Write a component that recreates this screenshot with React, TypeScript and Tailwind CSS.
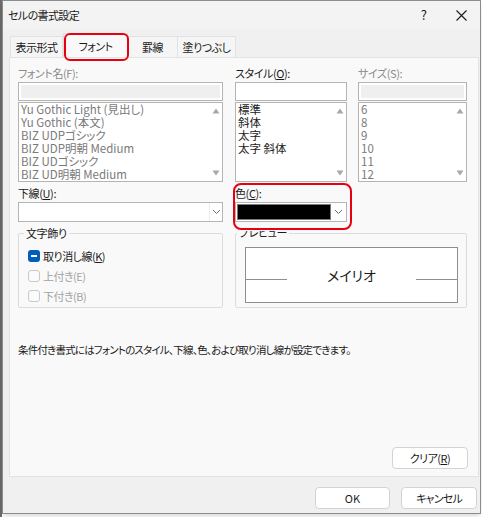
import React from "react";

const fontNames = [
  "Yu Gothic Light (見出し)",
  "Yu Gothic (本文)",
  "BIZ UDPゴシック",
  "BIZ UDP明朝 Medium",
  "BIZ UDゴシック",
  "BIZ UD明朝 Medium",
];
const styles = ["標準", "斜体", "太字", "太字 斜体"];
const sizes = ["6", "8", "9", "10", "11", "12"];

function ScrollArrows() {
  return (
    <div className="flex flex-col justify-between w-[12px] py-[5px] items-center">
      <svg width="8" height="6" viewBox="0 0 8 6">
        <path d="M4 0.5 L7.5 5.5 L0.5 5.5 Z" fill="#a8a8a8" />
      </svg>
      <svg width="8" height="6" viewBox="0 0 8 6">
        <path d="M0.5 0.5 L7.5 0.5 L4 5.5 Z" fill="#a8a8a8" />
      </svg>
    </div>
  );
}

function ListBox({ items, color }: { items: string[]; color: string }) {
  return (
    <div className="h-[80px] mt-[1px] border border-[#b4b4b4] bg-white flex overflow-hidden">
      <div className={`flex-1 pl-[2px] leading-[13px] text-[11.5px] ${color}`}>
        {items.map((t) => (
          <div key={t} className="h-[13px] whitespace-nowrap">
            {t}
          </div>
        ))}
      </div>
      <ScrollArrows />
    </div>
  );
}

function Chevron() {
  return (
    <svg width="9" height="6" viewBox="0 0 9 6">
      <path d="M1 1 L4.5 4.5 L8 1" fill="none" stroke="#6e6e6e" strokeWidth="1" />
    </svg>
  );
}

function Check({ checked, label, disabled }: { checked?: boolean; label: React.ReactNode; disabled?: boolean }) {
  return (
    <div className="flex items-center h-[20px]">
      {checked ? (
        <div className="w-[12px] h-[12px] rounded-[3px] bg-[#005fb8] flex items-center justify-center">
          <div className="w-[6px] h-[1.5px] bg-white" />
        </div>
      ) : (
        <div className="w-[12px] h-[12px] rounded-[3px] border border-[#c9c9c9] bg-[#fbfbfb]" />
      )}
      <span
        className={`ml-[3px] text-[11px] tracking-[-0.5px] ${disabled ? "text-[#a3a3a3]" : "text-[#1a1a1a]"}`}
      >
        {label}
      </span>
    </div>
  );
}

export default function App() {
  return (
    <div
      className="w-[482px] h-[517px] bg-white flex overflow-hidden text-[#1a1a1a] [font-feature-settings:'palt']"
      style={{ fontFamily: '"Noto Sans CJK JP", "Noto Sans", sans-serif' }}
    >
      <div className="w-[2px] h-full bg-[#6b6b6b]" />
      <div className="w-[479px] h-[514px] border border-[#8c8c8c] bg-[#f0f0f0] flex flex-col shadow-md">
        {/* title bar */}
        <div className="h-[28px] flex items-center pl-[5px] bg-[#f3f3f3]">
          <span className="text-[11px] tracking-[-0.6px]">セルの書式設定</span>
          <span className="ml-auto text-[13px] mr-[29px]">?</span>
          <svg width="11" height="11" viewBox="0 0 11 11" className="mr-[13px]">
            <path d="M0.5 0.5 L10.5 10.5 M10.5 0.5 L0.5 10.5" stroke="#1a1a1a" strokeWidth="1.1" />
          </svg>
        </div>

        {/* tabs */}
        <div className="h-[28px] flex items-end pl-[7px] text-[11px] tracking-[-0.5px]">
          <div className="w-[53px] h-[21px] flex items-center justify-center border border-b-0 border-[#e2e2e2] bg-[#f5f5f5]">
            表示形式
          </div>
          <div className="relative w-[65px] h-[24px] flex items-center justify-center bg-[#f9f9f9] border border-b-0 border-[#dedede] pt-[1px]">
            フォント
            <div className="absolute left-[0px] top-[-1px] w-[65px] h-[28px] border-2 border-[#e60012] rounded-[6px]" />
          </div>
          <div className="w-[50px] h-[21px] flex items-center justify-center border border-b-0 border-l-0 border-[#e2e2e2] bg-[#f5f5f5]">
            罫線
          </div>
          <div className="w-[58px] h-[21px] flex items-center justify-center border border-b-0 border-l-0 border-[#e2e2e2] bg-[#f5f5f5]">
            塗りつぶし
          </div>
        </div>

        {/* panel */}
        <div className="ml-[6px] w-[470px] h-[420px] border border-[#e3e3e3] bg-[#f9f9f9] pl-[8px] pr-[10px] pt-[7px] flex flex-col">
          <div className="flex">
            <div className="w-[205px]">
              <div className="h-[16px] leading-[16px] text-[11px] tracking-[-0.4px] text-[#8a8a8a]">フォント名(F):</div>
              <div className="mt-[1px] h-[19px] border border-[#b4b4b4] bg-white p-[2px]">
                <div className="w-full h-full bg-[#efefef]" />
              </div>
              <ListBox items={fontNames} color="text-[#7a7a7a]" />
            </div>
            <div className="w-[112px] ml-[12px]">
              <div className="h-[16px] leading-[16px] text-[11px] tracking-[-0.4px]">
                スタイル(<span className="underline">O</span>):
              </div>
              <div className="mt-[1px] h-[19px] border border-[#b4b4b4] bg-white" />
              <ListBox items={styles} color="text-[#1a1a1a]" />
            </div>
            <div className="w-[109px] ml-[11px]">
              <div className="h-[16px] leading-[16px] text-[11px] tracking-[-0.4px] text-[#8a8a8a]">サイズ(S):</div>
              <div className="mt-[1px] h-[19px] border border-[#b4b4b4] bg-white p-[2px]">
                <div className="w-full h-full bg-[#efefef]" />
              </div>
              <ListBox items={sizes} color="text-[#7a7a7a]" />
            </div>
          </div>

          <div className="flex mt-[3px]">
            <div className="w-[205px]">
              <div className="h-[16px] leading-[16px] text-[11px] tracking-[-0.4px]">
                下線(<span className="underline">U</span>):
              </div>
              <div className="mt-[1px] h-[20px] border border-[#b4b4b4] bg-white flex">
                <div className="flex-1" />
                <div className="w-[13px] border-l border-[#ececec] flex items-center justify-center">
                  <Chevron />
                </div>
              </div>
            </div>
            <div className="w-[112px] ml-[12px] relative">
              <div className="h-[16px] leading-[16px] text-[11px] tracking-[-0.4px]">
                色(<span className="underline">C</span>):
              </div>
              <div className="mt-[1px] h-[20px] border border-[#b4b4b4] bg-white flex p-[1px]">
                <div className="flex-1 bg-black border border-[#7a7a7a]" />
                <div className="w-[14px] flex items-center justify-center">
                  <Chevron />
                </div>
              </div>
              <div className="absolute left-[-2px] top-[-2px] w-[119px] h-[47px] border-2 border-[#e60012] rounded-[8px]" />
            </div>
          </div>

          <div className="flex mt-[11px]">
            <div className="relative w-[205px] h-[75px] border border-[#dcdcdc] rounded-[2px] pl-[9px] pt-[12px]">
              <div className="absolute left-[5px] top-[-9px] px-[2px] bg-[#f9f9f9] text-[11px] tracking-[-0.4px] leading-[16px]">
                文字飾り
              </div>
              <Check
                checked
                label={
                  <>
                    取り消し線(<span className="underline">K</span>)
                  </>
                }
              />
              <Check disabled label="上付き(E)" />
              <Check disabled label="下付き(B)" />
            </div>
            <div className="relative w-[232px] ml-[12px] h-[75px] border border-[#dcdcdc] rounded-[2px] pl-[9px] pr-[8px] pt-[13px]">
              <div className="absolute left-[1px] top-[-3px] h-[9px] overflow-hidden px-[2px] bg-[#f9f9f9]">
                <div className="text-[11px] tracking-[-0.4px] leading-[16px] mt-[-7px]">プレビュー</div>
              </div>
              <div className="h-[56px] border border-[#8e8e8e] bg-white flex items-center">
                <div className="w-[41px] h-px bg-[#8e8e8e] mt-[9px]" />
                <div className="flex-1 text-center text-[14px]">メイリオ</div>
                <div className="w-[41px] h-px bg-[#8e8e8e] mt-[9px]" />
              </div>
            </div>
          </div>

          <div className="mt-[34px] h-[16px] leading-[16px] text-[10.5px] tracking-[-0.8px] whitespace-nowrap">
            条件付き書式にはフォントのスタイル、下線、色、および取り消し線が設定できます。
          </div>

          <div className="flex justify-end mt-[89px]">
            <button className="w-[76px] h-[22px] bg-white border border-[#d3d3d3] rounded-[4px] text-[11px] tracking-[-0.5px]">
              クリア(<span className="underline">R</span>)
            </button>
          </div>
        </div>

        {/* buttons */}
        <div className="flex justify-end mt-[10px] mr-[3px] gap-[11px]">
          <button className="w-[75px] h-[22px] bg-white border border-[#d3d3d3] rounded-[4px] text-[11px]">OK</button>
          <button className="w-[76px] h-[22px] bg-white border border-[#d3d3d3] rounded-[4px] text-[11px] tracking-[-0.8px]">
            キャンセル
          </button>
        </div>
      </div>
    </div>
  );
}
